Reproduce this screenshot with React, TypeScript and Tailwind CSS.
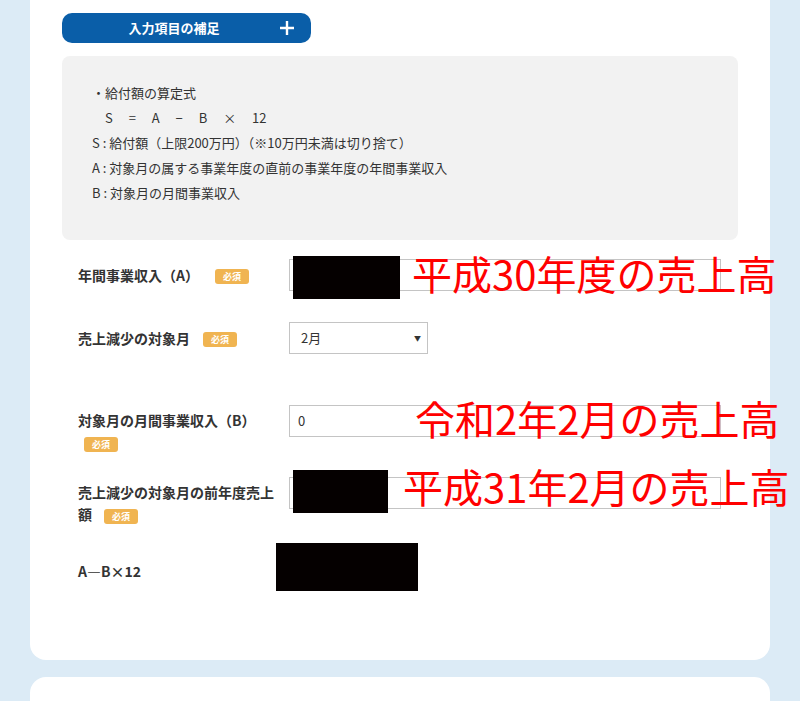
const jp = "font-['Noto_Sans_CJK_JP','Noto_Sans',sans-serif]";

function Badge({ className = "" }: { className?: string }) {
  return (
    <span
      className={`inline-flex h-[15px] w-[34px] items-center justify-center rounded-[3px] bg-[#f0b451] align-middle text-[9px] font-bold leading-none text-white ${className}`}
    >
      必須
    </span>
  );
}

function Redact({ className }: { className: string }) {
  return <div className={`absolute bg-[#050000] ${className}`} />;
}

function Note({ className, children }: { className: string; children: string }) {
  return (
    <div
      className={`pointer-events-none absolute whitespace-nowrap text-[40px] leading-none text-[#ff0000] ${className}`}
    >
      {children}
    </div>
  );
}

export default function App() {
  return (
    <div className={`min-h-screen bg-[#dcebf6] px-[30px] text-[#333] ${jp}`}>
      {/* main card */}
      <div className="relative rounded-b-[16px] bg-white px-[32px] pb-[73px] pt-[13px]">
        <button className="flex h-[30px] w-[249px] items-center rounded-[10px] bg-[#0a5ea8] pl-[11px] text-white">
          <span className="flex-1 text-center text-[13px] font-bold">入力項目の補足</span>
          <span className="mr-[12px] flex w-[24px] justify-center">
            <svg width="16" height="16" viewBox="0 0 16 16">
              <path d="M8 1v14M1 8h14" stroke="white" strokeWidth="2.4" />
            </svg>
          </span>
        </button>

        {/* supplement box */}
        <div className="mt-[13px] h-[184px] rounded-[8px] bg-[#f2f2f2] pl-[30px] pt-[24px] text-[13px] leading-[25px]">
          <p>・給付額の算定式</p>
          <p className="whitespace-pre">{"　S　 =　 A　 −　 B　 ×　 12"}</p>
          <p>S : 給付額（上限200万円）（※10万円未満は切り捨て）</p>
          <p>A : 対象月の属する事業年度の直前の事業年度の年間事業収入</p>
          <p>B : 対象月の月間事業収入</p>
        </div>

        {/* row 1 */}
        <div className="mt-[19px] flex items-center">
          <div className="w-[227px] pl-[16px] text-[14px] font-bold">
            年間事業収入（A）
            <Badge className="ml-[16px]" />
          </div>
          <div className="relative">
            <div className="h-[32px] w-[432px] border border-[#c4c4c4] bg-white" />
            <Redact className="left-[4px] top-[-3px] h-[43px] w-[107px]" />
          </div>
        </div>

        {/* row 2 */}
        <div className="mt-[31px] flex items-center">
          <div className="w-[227px] pl-[16px] text-[14px] font-bold">
            売上減少の対象月
            <Badge className="ml-[13px]" />
          </div>
          <div className="flex h-[32px] w-[139px] items-center justify-between border border-[#c4c4c4] bg-white pl-[11px] pr-[6px] text-[13px]">
            <span>2月</span>
            <span className="text-[7px]">▼</span>
          </div>
        </div>

        {/* row 3 */}
        <div className="mt-[51px] flex items-start">
          <div className="w-[227px] pl-[16px] pt-[4px] text-[14px] font-bold leading-[22px]">
            対象月の月間事業収入（B）
            <br />
            <Badge className="ml-[6px]" />
          </div>
          <div className="flex h-[32px] w-[432px] items-center border border-[#c4c4c4] bg-white pl-[8px] text-[13px]">
            0
          </div>
        </div>

        {/* row 4 */}
        <div className="mt-[24px] flex items-start">
          <div className="w-[227px] pl-[16px] pt-[4px] text-[14px] font-bold leading-[22px]">
            売上減少の対象月の前年度売上
            <br />
            額<Badge className="ml-[12px]" />
          </div>
          <div className="relative">
            <div className="h-[32px] w-[432px] border border-[#c4c4c4] bg-white" />
            <Redact className="left-[4px] top-[-7px] h-[43px] w-[95px]" />
          </div>
        </div>

        {/* row 5 */}
        <div className="relative mt-[30px] flex h-[32px] items-center">
          <div className="w-[227px] pl-[16px] text-[14px] font-bold">A―B×12</div>
          <Redact className="left-[214px] top-[-12px] h-[48px] w-[142px]" />
        </div>

        {/* annotations */}
        <Note className="left-[382px] top-[253px]">平成30年度の売上高</Note>
        <Note className="left-[385px] top-[398px]">令和2年2月の売上高</Note>
        <Note className="left-[373px] top-[466px]">平成31年2月の売上高</Note>
      </div>

      {/* next card */}
      <div className="mt-[17px] h-[60px] rounded-t-[16px] bg-white" />
    </div>
  );
}
